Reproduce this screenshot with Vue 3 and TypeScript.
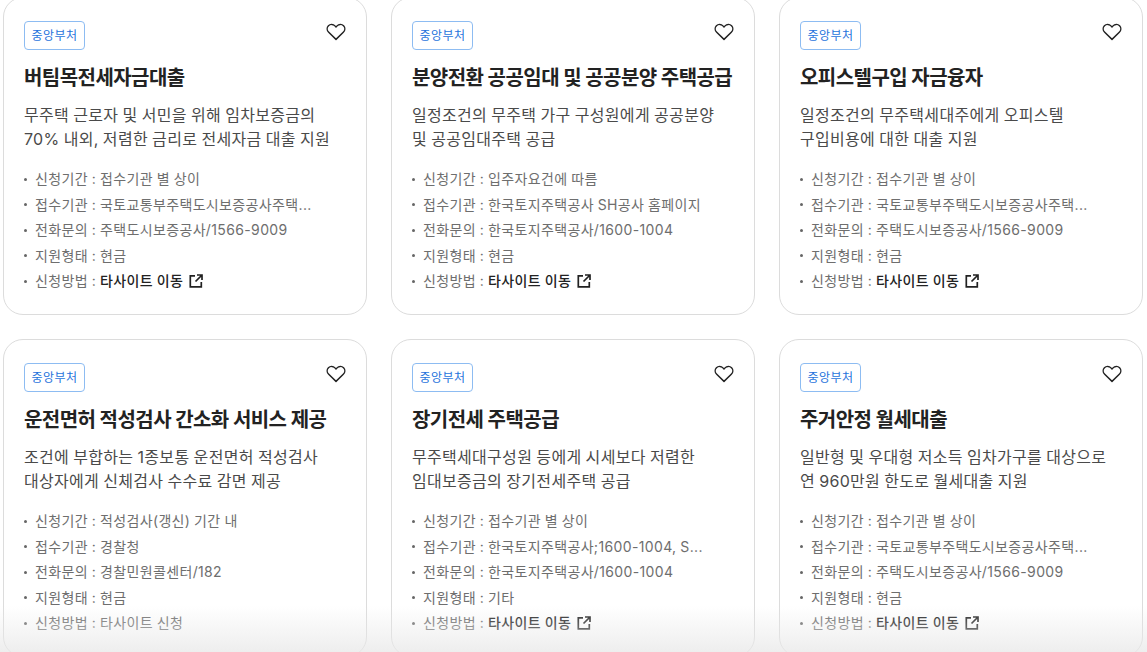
<script setup lang="ts">
interface Row { label: string; value: string; link?: boolean }
interface Card { title: string; desc: string[]; rows: Row[] }
const mk = (a: string, b: string, c: string, d: string, e: string, link = true): Row[] => [
  { label: '신청기간', value: a },
  { label: '접수기관', value: b },
  { label: '전화문의', value: c },
  { label: '지원형태', value: d },
  { label: '신청방법', value: e, link },
]
const cards: Card[] = [
  { title: '버팀목전세자금대출', desc: ['무주택 근로자 및 서민을 위해 임차보증금의', '70% 내외, 저렴한 금리로 전세자금 대출 지원'], rows: mk('접수기관 별 상이', '국토교통부주택도시보증공사주택...', '주택도시보증공사/1566-9009', '현금', '타사이트 이동') },
  { title: '분양전환 공공임대 및 공공분양 주택공급', desc: ['일정조건의 무주택 가구 구성원에게 공공분양', '및 공공임대주택 공급'], rows: mk('입주자요건에 따름', '한국토지주택공사 SH공사 홈페이지', '한국토지주택공사/1600-1004', '현금', '타사이트 이동') },
  { title: '오피스텔구입 자금융자', desc: ['일정조건의 무주택세대주에게 오피스텔', '구입비용에 대한 대출 지원'], rows: mk('접수기관 별 상이', '국토교통부주택도시보증공사주택...', '주택도시보증공사/1566-9009', '현금', '타사이트 이동') },
  { title: '운전면허 적성검사 간소화 서비스 제공', desc: ['조건에 부합하는 1종보통 운전면허 적성검사', '대상자에게 신체검사 수수료 감면 제공'], rows: mk('적성검사(갱신) 기간 내', '경찰청', '경찰민원콜센터/182', '현금', '타사이트 신청', false) },
  { title: '장기전세 주택공급', desc: ['무주택세대구성원 등에게 시세보다 저렴한', '임대보증금의 장기전세주택 공급'], rows: mk('접수기관 별 상이', '한국토지주택공사;1600-1004, S...', '한국토지주택공사/1600-1004', '기타', '타사이트 이동') },
  { title: '주거안정 월세대출', desc: ['일반형 및 우대형 저소득 임차가구를 대상으로', '연 960만원 한도로 월세대출 지원'], rows: mk('접수기관 별 상이', '국토교통부주택도시보증공사주택...', '주택도시보증공사/1566-9009', '현금', '타사이트 이동') },
]
</script>

<template>
  <div class="page">
    <div class="grid">
      <article v-for="card in cards" :key="card.title" class="card">
        <div class="top">
          <span class="tag">중앙부처</span>
          <svg class="heart" width="20" height="18" viewBox="0 0 22 20" fill="none" aria-hidden="true">
            <path d="M11 18.2 2.900 10.300C.7 8.100.7 5 2.600 3c2-2 5.300-1.900 7.200.2L11 4.500l1.200-1.300c1.900-2.100 5.200-2.200 7.200-.2 1.900 2 1.900 5.100-.3 7.300L11 18.200Z" stroke="#222" stroke-width="1.600" stroke-linejoin="round" />
          </svg>
        </div>
        <h3 class="title">{{ card.title }}</h3>
        <p class="desc"><span v-for="line in card.desc" :key="line">{{ line }}</span></p>
        <ul class="rows">
          <li v-for="row in card.rows" :key="row.label">
            <i class="dot"></i>
            <span>{{ row.label }} : </span>
            <template v-if="row.link">
              <b class="link">{{ row.value }}</b>
              <svg class="ext" width="14" height="14" viewBox="0 0 14 14" fill="none" aria-hidden="true">
                <path d="M6 1.800H1.300v11h11V8M8 1h5v5M13 1 6.500 7.500" stroke="#222" stroke-width="1.700" />
              </svg>
            </template>
            <span v-else>{{ row.value }}</span>
          </li>
        </ul>
      </article>
    </div>
    <div class="fade"></div>
  </div>
</template>

<style>
html, body { margin: 0; background: #fff; overflow: hidden; }
</style>

<style scoped>
.page {
  position: relative;
  width: 1147px;
  height: 652px;
  overflow: hidden;
  font-family: Inter, "Noto Sans CJK KR", sans-serif;
}
.grid {
  display: grid;
  grid-template-columns: repeat(3, 364px);
  gap: 24px;
  margin: -3px 0 0 3px;
}
.card {
  box-sizing: border-box;
  height: 318px;
  padding: 23px 20px 0;
  border: 1px solid #dcdcdc;
  border-radius: 20px;
  background: #fff;
}
.top { display: flex; justify-content: space-between; align-items: flex-start; }
.tag {
  box-sizing: border-box;
  display: flex;
  align-items: center;
  justify-content: center;
  width: 61px;
  height: 29px;
  padding-bottom: 2px;
  border: 1px solid #8dbcf2;
  border-radius: 4px;
  color: #1f74dc;
  font-size: 12px;
  letter-spacing: 0.4px;
}
.heart { margin: 2px 0 0; }
.title {
  margin: 13px 0 0;
  font-size: 20px;
  line-height: 30px;
  font-weight: 700;
  letter-spacing: -0.55px;
  color: #222;
}
.desc {
  margin: 10px 0 0;
  font-size: 16px;
  line-height: 24px;
  letter-spacing: 0.3px;
  word-spacing: -0.6px;
  color: #4a4a4a;
}
.desc span { display: block; white-space: nowrap; }
.rows {
  list-style: none;
  margin: 15.300px 0 0;
  padding: 0;
  font-size: 14px;
  line-height: 25.500px;
  letter-spacing: 0.36px;
  word-spacing: -0.5px;
  color: #6e6e6e;
}
.rows li { display: flex; align-items: center; white-space: pre; height: 25.500px; }
.dot {
  width: 3px;
  height: 3px;
  margin-right: 8px;
  border-radius: 50%;
  background: #666;
}
.link { font-weight: 500; color: #222; letter-spacing: 0.4px; }
.ext { margin-left: 6px; }
.fade {
  position: absolute;
  left: 0;
  right: 0;
  bottom: 0;
  height: 46px;
  background: linear-gradient(rgba(232, 232, 232, 0), rgba(232, 232, 232, 0.75));
  pointer-events: none;
}
</style>
